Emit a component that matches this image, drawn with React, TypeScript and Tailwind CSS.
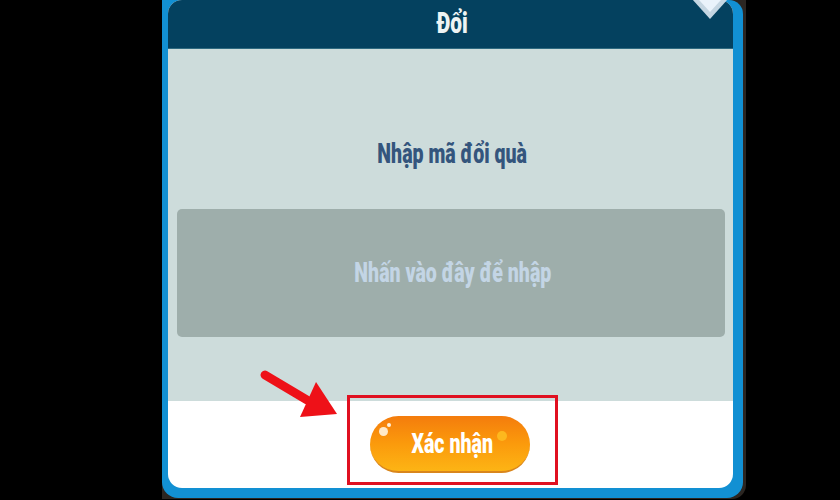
export default function App() {
  const font = { fontFamily: '"Roboto", "Liberation Sans", sans-serif' };
  return (
    <div className="relative w-[840px] h-[500px] overflow-hidden bg-black pl-[162px]" style={font}>
      <div className="w-[584px] h-[499px] bg-[#2b2622] pr-[3px] rounded-br-[14px]">
        <div className="relative w-[581px] h-[498px] bg-[#1290d3] pl-[6px] pr-[10px] pb-[10px] rounded-b-[16px] rounded-tr-[14px]">
          <div className="relative flex flex-col w-[565px] h-[488px] overflow-hidden rounded-t-[14px] rounded-b-[14px] bg-white">
            <div className="flex h-[49px] shrink-0 items-center justify-center bg-[#04415f] border-b border-[#2f6a80]">
              <span className="inline-block scale-x-[0.72] text-[29px] font-black leading-none text-[#eef4f4] pb-[1px] pl-[5px]">Đổi</span>
            </div>
            <div className="flex h-[352px] shrink-0 flex-col items-center bg-[#cddcdb] px-[9px]">
              <div className="flex h-[160px] items-start justify-center pt-[90px] pl-[3px]">
                <span className="inline-block scale-x-[0.725] text-[27px] font-black leading-[30px] text-[#34557d] whitespace-nowrap">Nhập mã đổi quà</span>
              </div>
              <div className="flex h-[128px] w-[548px] items-center justify-center rounded-[5px] bg-[#9eaeab] pl-[5px] pt-[1px]">
                <span className="inline-block scale-x-[0.725] text-[27px] font-black leading-none text-[#c3d5e5] whitespace-nowrap">Nhấn vào đây để nhập</span>
              </div>
            </div>
            <div className="flex flex-1 justify-center pt-[15px]">
              <div className="relative mr-[2px] flex h-[57px] w-[160px] items-center justify-center rounded-full bg-gradient-to-b from-[#f47c0c] via-[#fb9a0c] to-[#fdb414] border-b-2 border-[#d9861c]">
                <span className="inline-block scale-x-[0.7] text-[28px] font-black leading-none text-white whitespace-nowrap pl-[7px]">Xác nhận</span>
                <span className="absolute left-[9px] top-[11px] h-[9px] w-[9px] rounded-full bg-[#ffe9c8]" />
                <span className="absolute left-[17px] top-[7px] h-[4px] w-[4px] rounded-full bg-[#fff2dd]" />
                <span className="absolute right-[23px] top-[15px] h-[10px] w-[10px] rounded-full bg-[#fdb81e]" />
              </div>
            </div>
          </div>
          <svg className="absolute right-[6px] top-[-11px]" width="54" height="32" viewBox="0 0 54 32">
            <path d="M0 0 L54 0 L27 30 Z" fill="#c5d6e2" />
            <path d="M6 0 L48 0 L27 23 Z" fill="#eaf3fb" />
          </svg>
        </div>
      </div>
      <div className="absolute left-[347px] top-[395px] h-[90px] w-[211px] border-[3px] border-[#e01020]" />
      <svg className="absolute left-[255px] top-[365px]" width="90" height="60" viewBox="0 0 90 60">
        <path d="M10 10 L52 35" stroke="#ee1118" strokeWidth="9" strokeLinecap="round" fill="none" />
        <path d="M61 17 L82 49 L45 52 Z" fill="#ee1118" />
      </svg>
    </div>
  );
}
